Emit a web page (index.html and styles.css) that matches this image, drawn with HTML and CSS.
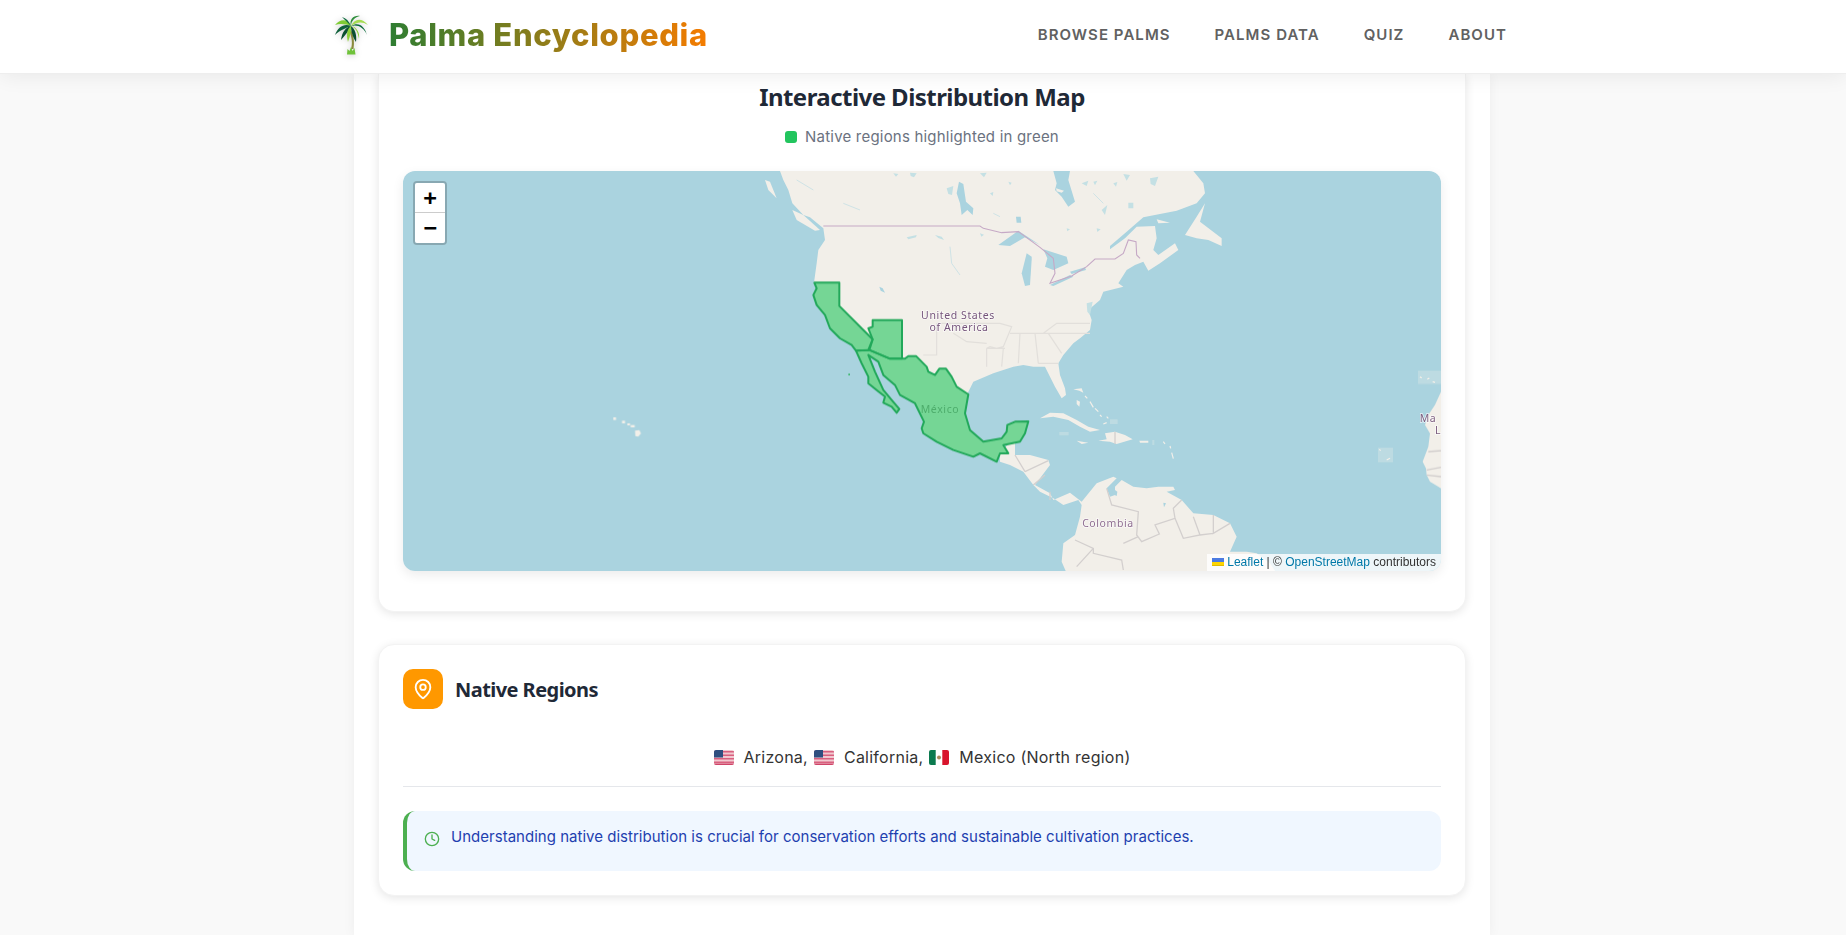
FILE: index.html
```html
<!DOCTYPE html>
<html lang="en">
<head>
    <meta charset="UTF-8">
    <meta name="viewport" content="width=device-width, initial-scale=1.0">
    <title>Palma Encyclopedia</title>
    <link rel="stylesheet" href="styles.css">
</head>
<body>

<header class="site-header">
    <div class="header-inner">
        <a class="brand" href="#">
            <!-- palm logo -->
            <svg class="brand-logo" width="36" height="40" viewBox="0 0 36 40">
                <path d="M16.5 16 C19 23 19.5 28 18 34 L20.5 34 C21.5 27 21 22 18.5 16 Z" fill="#8a8a3c"/>
                <path d="M14 39.5 L14.5 34 L16.5 36 L18 32 L19.5 36 L21.5 33 L22.5 39.5 Z" fill="#6fc23a"/>
                <path d="M18 11 C14 3 7 4 2 10 C7 8 13 9 18 11 Z" fill="#7fcb35"/>
                <path d="M18 11 C12 8 5 11 2 20 C7 15 13 13 18 11 Z" fill="#0e5f3a"/>
                <path d="M18 11 C13 12 9 17 8 25 C12 20 16 16 18 11 Z" fill="#0b4f31"/>
                <path d="M18 11 C14 14 13 20 15 27 C17 21 19 16 18 11 Z" fill="#8ed13a"/>
                <path d="M18 11 C18 15 19 21 23 27 C24 20 22 14 18 11 Z" fill="#0b4f31"/>
                <path d="M18 11 C22 12 25 17 26 24 C27 18 24 12 18 11 Z" fill="#8ed13a"/>
                <path d="M18 11 C24 9 31 12 34 20 C32 12 26 6 18 11 Z" fill="#0e6b3d"/>
                <path d="M18 11 C24 7 29 6 35 10 C29 3 22 3 18 11 Z" fill="#a5dc52"/>
                <path d="M18 11 C18 6 22 2 27 1 C21 0 16 4 18 11 Z" fill="#2f8f3c"/>
                <path d="M18 11 C16 6 13 3 9 2 C12 5 15 8 18 11 Z" fill="#0e6b3d"/>
            </svg>
            <span class="brand-name">Palma Encyclopedia</span>
        </a>
        <nav class="main-nav">
            <a href="#">Browse Palms</a>
            <a href="#">Palms Data</a>
            <a href="#">Quiz</a>
            <a href="#">About</a>
        </nav>
    </div>
</header>

<main class="page">

    <section class="card card-map">
        <h2 class="map-title">Interactive Distribution Map</h2>
        <p class="map-legend"><span class="legend-dot"></span>Native regions highlighted in green</p>

        <div class="map">
            <!-- viewBox uses page coordinates, the groups are scaled up sketches of each area -->
            <svg class="map-canvas" width="1038" height="400" viewBox="403 171 1038 400">
                <defs>
                    <polygon id="california" points="103,68 178,68 178,138 278,238 265,270 228,272 215,255 180,235 150,205 135,165 110,135 100,105 110,85"/>
                    <polygon id="arizona" points="278,180 366,180 366,296 330,296 268,270 278,238 265,205 278,200"/>
                    <polygon id="mexico" points="228,272 268,270 330,296 375,296 385,288 408,288 440,320 445,335 465,345 478,326 498,326 515,350 530,380 565,403 555,460 570,510 610,545 665,535 680,515 682,495 705,485 745,484 735,520 720,545 670,555 685,580 660,580 650,605 600,580 580,590 520,570 470,545 430,520 425,505 432,485 405,430 360,405 345,375 310,345 295,305 265,285 285,335 310,390 335,420 358,447 350,458 335,440 310,428 315,410 290,390 265,370 265,350 245,310"/>
                </defs>

                <rect class="water" x="403" y="171" width="1038" height="400"/>

                <g class="tiles">
                    <!-- north america -->
                    <g transform="translate(760 160) scale(.33333)">
                        <path class="land" d="M60,33 L70,60 L85,90 L97,130 L130,165 L150,172 L190,205 L195,240 L175,270 L170,310 L162,368 L180,420 L260,520 L330,572 L390,596 L435,596 L540,650 L625,703 L623,700 L640,665 L700,640 L760,620 L790,615 L820,620 L855,620 L870,650 L885,680 L905,715 L918,705 L915,685 L900,645 L895,610 L910,585 L940,550 L960,535 L990,510 L995,480 L985,450 L1020,420 L1030,395 L1090,380 L1075,370 L1100,330 L1125,315 L1150,305 L1165,332 L1200,310 L1255,270 L1245,250 L1195,285 L1180,270 L1190,235 L1185,198 L1130,200 L1095,235 L1050,268 L1050,258 L1100,215 L1150,172 L1250,152 L1310,130 L1335,100 L1330,70 L1300,33 Z"/>
                        <path class="land" d="M97,150 L130,165 L180,210 L165,212 L110,180 Z"/>
                        <path class="land" d="M15,60 L30,65 L50,115 L25,90 Z"/>
                        <path class="land" d="M1275,225 L1310,170 L1335,130 L1320,185 L1385,235 L1385,258 L1345,240 L1310,235 Z"/>
                        <path class="land" d="M1190,178 L1230,188 L1195,190 Z"/>

                        <path class="lake" d="M880,33 L930,33 L925,60 L945,125 L925,140 L905,110 L885,90 L890,70 Z"/>
                        <path class="land" d="M888,85 L912,92 L905,98 L890,94 Z"/>
                        <path class="lake" d="M597,65 L610,72 L618,125 L640,145 L638,165 L622,150 L605,165 L600,130 L590,100 Z"/>
                        <path class="lake" d="M715,255 L775,212 L840,255 L795,232 L750,258 Z"/>
                        <path class="lake" d="M785,340 L800,280 L815,290 L815,300 L810,375 L795,378 Z"/>
                        <path class="lake" d="M850,268 L920,290 L925,310 L880,330 L855,320 L862,295 Z"/>
                        <path class="lake" d="M870,375 L930,345 L940,350 L880,378 Z"/>
                        <path class="lake" d="M930,335 L975,322 L978,330 L935,342 Z"/>
                        <path class="lake" d="M768,170 L782,170 L784,188 L770,188 Z"/>
                        <path class="lake" d="M358,380 L368,385 L375,398 L362,392 Z"/>
                        <path class="lake-soft" d="M450,38 L470,40 L462,52 L452,48 Z M660,40 L680,38 L672,52 Z M560,85 L580,78 L576,105 L565,102 Z M965,70 L985,62 L980,78 Z M1000,65 L1012,62 L1005,76 Z M1090,42 L1110,45 L1100,62 Z M1170,55 L1195,50 L1185,78 L1172,72 Z M1025,150 L1042,135 L1035,165 Z M1105,128 L1120,128 L1120,145 L1105,145 Z M980,430 L998,425 L990,465 L982,455 Z M690,100 L700,96 L698,108 Z M400,40 L415,42 L408,50 Z M1060,70 L1072,66 L1068,80 Z M745,65 L755,68 L750,76 Z M1010,205 L1022,208 L1012,216 Z M920,205 L930,208 L922,214 Z M660,220 L672,224 L664,230 Z M525,225 L545,230 L552,240 L535,234 Z M440,232 L470,225 L468,232 L445,238 Z"/>
                        <path class="river" d="M570,260 L575,310 L600,345"/>
                        <path class="river" d="M700,160 L720,170 M250,130 L300,150 M110,60 L160,90 M1000,100 L1030,130"/>

                        <path class="state" d="M530,490 L530,585 L490,585 M530,490 L720,490 L755,500 L730,560 L710,565 L690,560 L680,565 L735,565 M750,520 L990,520 M850,520 L890,490 L990,490 M680,565 L680,620 M730,565 L725,620 M780,520 L775,610 M825,520 L835,610 M865,520 L905,580 M835,610 L895,610 M580,520 L620,545 L680,550"/>
                        <path class="border" d="M190,198 L660,198 L670,205 L725,218 L775,215 L840,262 L880,295 L885,340 L870,370 L935,348 L980,320 L1005,297 L1065,297 L1090,280 L1105,240 L1128,245 L1130,285 L1140,295"/>
                    </g>

                    <!-- mexico, under the green overlay -->
                    <g transform="translate(780 260) scale(.33333)">
                        <use href="#california" class="land"/>
                        <use href="#arizona" class="land"/>
                        <use href="#mexico" class="land"/>
                    </g>

                    <!-- central + south america -->
                    <g transform="translate(1000 420) scale(.33333)">
                        <path class="land" d="M0,96 L45,55 L45,105 L90,105 L145,120 L150,135 L105,195 L150,220 L160,240 L210,218 L245,245 L290,190 L340,170 L350,175 L320,205 L330,230 L345,225 L345,200 L365,180 L400,200 L440,205 L475,200 L520,200 L525,210 L500,215 L545,240 L580,280 L640,285 L690,310 L710,350 L690,395 L740,395 L770,400 L810,430 L830,460 L200,460 L185,425 L190,370 L225,345 L240,290 L245,255 L235,240 L190,255 L160,235 L120,215 L100,195 L70,155 L30,135 L0,125 Z"/>
                        <path class="state dark" d="M45,105 L75,155 M75,155 L145,122 M100,195 L135,165 M150,215 L150,240 M320,205 L335,255 L415,275 L410,345 L425,365 L478,342 L465,315 L525,295 L520,265 L545,240 M525,295 L550,355 L600,345 L580,290 M640,285 L640,340 L690,310 M600,345 L640,340 M225,360 L280,385 L280,400 L365,420 L370,450 M370,370 L415,350 M280,385 L230,440"/>
                        <path class="lake" d="M338,205 L352,215 L350,228 L338,222 Z"/>
                        <path class="lake" d="M490,248 L498,250 L492,262 Z"/>
                    </g>

                    <!-- caribbean -->
                    <g transform="translate(1000 320) scale(.33333)">
                        <path class="land" d="M120,295 L150,278 L190,280 L230,300 L265,320 L300,330 L270,335 L240,320 L205,300 L160,290 Z"/>
                        <path class="land" d="M295,362 L320,358 L315,340 L345,335 L375,345 L398,358 L350,372 L330,365 Z"/>
                        <path class="land" d="M230,362 L265,368 L245,372 Z"/>
                        <path class="land" d="M418,362 L445,362 L445,368 L420,368 Z"/>
                        <path class="land" d="M230,240 L240,245 L238,260 L230,252 Z"/>
                        <path class="land" d="M220,208 L245,205 L250,218 L238,212 Z"/>
                        <path class="speck" d="M255,228 L262,235 M270,245 L280,262 M285,265 L295,275 M300,285 L305,290 M320,290 L325,295 M310,312 L320,308 M490,365 L495,372 M510,378 L512,385 M515,398 L520,416"/>
                        <rect class="tile-ghost" x="330" y="298" width="23" height="14"/>
                        <rect class="tile-ghost" x="178" y="336" width="28" height="10"/>
                        <rect class="tile-ghost" x="457" y="360" width="6" height="15"/>
                        <path class="state dark" d="M345,335 L345,372"/>
                    </g>

                    <!-- west africa, islands off it -->
                    <g transform="translate(1340 350) scale(.33333)">
                        <path class="land" d="M303,125 L285,165 L265,195 L255,225 L270,250 L265,290 L248,335 L258,355 L260,375 L270,395 L295,410 L303,415 L310,415 L310,125 Z"/>
                        <path class="state dark" d="M265,305 L303,302 M260,360 L303,352 M260,375 L303,380"/>
                        <rect class="tile-ghost" x="234" y="62" width="69" height="40"/>
                        <rect class="tile-ghost" x="114" y="293" width="45" height="44"/>
                        <path class="speck" d="M240,80 L245,84 M262,88 L268,84 M278,95 L285,97 M118,298 L122,302 M140,330 L150,325"/>
                    </g>

                    <!-- hawaii -->
                    <g transform="translate(590 390) scale(.33333)">
                        <path class="land" d="M135,122 L148,120 L153,130 L145,140 L136,138 Z"/>
                        <rect class="land" x="70" y="82" width="8" height="8"/>
                        <rect class="land" x="96" y="92" width="9" height="8"/>
                        <rect class="land" x="112" y="100" width="8" height="6"/>
                        <rect class="land" x="122" y="105" width="12" height="7"/>
                    </g>

                    <text class="label label-big" x="958" y="319">United States</text>
                    <text class="label label-big" x="959" y="331">of America</text>
                    <text class="label" x="1108" y="527">Colombia</text>
                    <text class="label label-small" x="1428" y="422">Ma</text>
                    <text class="label label-small" x="1438" y="434">L</text>
                    <text class="label label-mx" x="940" y="413">México</text>
                </g>

                <!-- native regions overlay -->
                <g transform="translate(780 260) scale(.33333)">
                    <use href="#california" class="native"/>
                    <use href="#arizona" class="native"/>
                    <use href="#mexico" class="native"/>
                    <rect class="native-dot" x="205" y="341" width="5" height="5"/>
                </g>
            </svg>

            <div class="zoom-control">
                <a class="zoom-btn" href="#">+</a>
                <a class="zoom-btn" href="#">&#x2212;</a>
            </div>

            <div class="attribution">
                <a href="#"><svg class="ua-flag" width="12" height="8" viewBox="0 0 12 8"><path fill="#4C7BE1" d="M0 0h12v4H0z"/><path fill="#FFD500" d="M0 4h12v3H0z"/><path fill="#E0BC00" d="M0 7h12v1H0z"/></svg> Leaflet</a>
                <span class="sep">|</span> &copy; <a href="#">OpenStreetMap</a> contributors
            </div>
        </div>
    </section>

    <section class="card">
        <div class="section-head">
            <span class="section-icon">
                <svg width="22" height="22" viewBox="0 0 24 24" fill="none" stroke="#fff" stroke-width="2" stroke-linecap="round" stroke-linejoin="round">
                    <path d="M20 10c0 4.993-5.539 10.193-7.399 11.799a1 1 0 0 1-1.202 0C9.539 20.193 4 14.993 4 10a8 8 0 0 1 16 0"/>
                    <circle cx="12" cy="10" r="3"/>
                </svg>
            </span>
            <h3>Native Regions</h3>
        </div>

        <p class="regions">
            <svg class="flag" viewBox="0 0 20 15"><rect width="20" height="15" fill="#f1c9d0"/><path d="M0 1h20v1.5H0zM0 4.5h20V6H0zM0 8h20v1.5H0zM0 11.5h20V13H0z" fill="#d9607f"/><rect y="13.5" width="20" height="1.5" fill="#cf4468"/><rect width="9" height="7.5" fill="#2f4f80"/></svg>
            <span>Arizona,</span>
            <svg class="flag" viewBox="0 0 20 15"><rect width="20" height="15" fill="#f1c9d0"/><path d="M0 1h20v1.5H0zM0 4.5h20V6H0zM0 8h20v1.5H0zM0 11.5h20V13H0z" fill="#d9607f"/><rect y="13.5" width="20" height="1.5" fill="#cf4468"/><rect width="9" height="7.5" fill="#2f4f80"/></svg>
            <span>California,</span>
            <svg class="flag" viewBox="0 0 20 15"><rect width="20" height="15" fill="#fff"/><rect width="6.7" height="15" fill="#0b7a4f"/><rect x="13.3" width="6.7" height="15" fill="#d8142c"/><circle cx="10" cy="7.5" r="2" fill="#a9895a"/></svg>
            <span>Mexico (North region)</span>
        </p>

        <div class="note">
            <svg class="note-icon" width="16" height="16" viewBox="0 0 24 24" fill="none" stroke="#4caf50" stroke-width="2" stroke-linecap="round" stroke-linejoin="round">
                <circle cx="12" cy="12" r="10"/>
                <polyline points="12 6 12 12 16 14"/>
            </svg>
            <p>Understanding native distribution is crucial for conservation efforts and sustainable cultivation practices.</p>
        </div>
    </section>

</main>

</body>
</html>
```

FILE: styles.css
```css
* {
    box-sizing: border-box;
}
body {
    margin: 0;
    padding-right: 2px;
    background-color: #f9f9f9;
    font-family: "Inter", "Noto Sans", sans-serif;
    color: #333;
}
a {
    text-decoration: none;
}

/* header */
.site-header {
    position: relative;
    z-index: 10;
    height: 74px;
    margin-right: -2px;
    padding-right: 2px;
    background-color: #fff;
    border-bottom: 1px solid #eee;
    box-shadow: 0 2px 20px rgba(0, 0, 0, 0.07);
}
.header-inner {
    width: 1200px;
    height: 100%;
    margin: 0 auto;
    padding: 0 15px 4px 11px;
    display: flex;
    align-items: center;
    justify-content: space-between;
}
.brand {
    display: flex;
    align-items: center;
    gap: 20px;
}
.brand-logo {
    filter: drop-shadow(0 1px 3px rgba(0, 0, 0, 0.2));
}
.brand-name {
    font-size: 31px;
    font-weight: 800;
    letter-spacing: 0.65px;
    line-height: 40px;
    background: linear-gradient(90deg, #2e7d32, #f57c00);
    -webkit-background-clip: text;
    background-clip: text;
    color: transparent;
}
.main-nav {
    display: flex;
    gap: 44px;
}
.main-nav a {
    font-size: 15px;
    font-weight: 600;
    letter-spacing: 1.05px;
    text-transform: uppercase;
    color: #616161;
}

/* page column */
.page {
    width: 1136px;
    min-height: 861px;
    margin: 0 auto;
    padding: 0 24px 40px;
    background-color: #fff;
    box-shadow: 0 0 12px rgba(0, 0, 0, 0.05);
}
.card {
    padding: 24px;
    background-color: #fff;
    border: 1px solid #f3f3f3;
    border-radius: 16px;
    box-shadow: 0 2px 10px rgba(0, 0, 0, 0.1);
}
.card-map {
    margin-bottom: 32px;
    padding-top: 7px;
    border-top: 0;
    border-radius: 0 0 16px 16px;
}
.map-title {
    margin: 0 0 12px;
    font-family: "Noto Sans", sans-serif;
    font-size: 24px;
    font-weight: 700;
    line-height: 32px;
    letter-spacing: -0.55px;
    text-align: center;
    color: #1f2937;
}
.map-legend {
    margin: 0 0 22px;
    display: flex;
    align-items: center;
    justify-content: center;
    gap: 8px;
    font-size: 15px;
    letter-spacing: 0.2px;
    line-height: 24px;
    color: #6b7280;
}
.legend-dot {
    width: 12px;
    height: 12px;
    border-radius: 3px;
    background-color: #22c55e;
}

/* map */
.map {
    position: relative;
    height: 400px;
    margin-bottom: 16px;
    overflow: hidden;
    border-radius: 12px;
    box-shadow: 0 4px 12px rgba(0, 0, 0, 0.08);
}
.map-canvas {
    display: block;
}
.water {
    fill: #aad3df;
}
.tiles {
    filter: blur(0.5px);
}
.land {
    fill: #f2efe9;
}
.lake {
    fill: #aad3df;
}
.lake-soft {
    fill: #c4e0e4;
}
.river {
    fill: none;
    stroke: #cfe3e6;
    stroke-width: 1;
    vector-effect: non-scaling-stroke;
}
.speck {
    fill: none;
    stroke: #f2efe9;
    stroke-width: 1.2;
    vector-effect: non-scaling-stroke;
}
.state {
    fill: none;
    stroke: #e2dfdb;
    stroke-width: 1.2;
    vector-effect: non-scaling-stroke;
}
.state.dark {
    stroke: #d3cfce;
    stroke-width: 1.3;
}
.border {
    fill: none;
    stroke: #c6a9c6;
    stroke-width: 1.1;
    vector-effect: non-scaling-stroke;
}
.tile-ghost {
    fill: #f2efe9;
    opacity: 0.28;
}
.label {
    font-family: "Noto Sans", sans-serif;
    font-size: 10.5px;
    letter-spacing: 0.6px;
    text-anchor: middle;
    fill: #8e6d90;
    paint-order: stroke;
    stroke: rgba(255, 255, 255, 0.7);
    stroke-width: 1.5px;
}
.label-big {
    fill: #74537a;
}
.label-small {
    fill: #7d5f80;
}
.label-mx {
    fill: #8e8a80;
    stroke: none;
}
defs polygon {
    vector-effect: non-scaling-stroke;
}
.native {
    fill: #22c55e;
    fill-opacity: 0.6;
    stroke: #22a85a;
    stroke-width: 2;
    stroke-linejoin: round;
}
.native-dot {
    fill: #34b565;
}
.zoom-control {
    position: absolute;
    top: 10px;
    left: 10px;
    border: 2px solid rgba(0, 0, 0, 0.2);
    border-radius: 4px;
    background-clip: padding-box;
}
.zoom-btn {
    display: block;
    width: 30px;
    height: 30px;
    font: bold 22px/30px "DejaVu Sans Mono", monospace;
    text-align: center;
    color: #000;
    background-color: #fff;
}
.zoom-btn:first-child {
    border-bottom: 1px solid #ccc;
    border-radius: 2px 2px 0 0;
}
.zoom-btn:last-child {
    border-radius: 0 0 2px 2px;
}
.attribution {
    position: absolute;
    right: 0;
    bottom: 0;
    padding: 0 5px;
    font: 12px/17px "Liberation Sans", Arial, sans-serif;
    color: #333;
    background-color: rgba(255, 255, 255, 0.8);
}
.attribution a {
    color: #0078a8;
}
.ua-flag {
    display: inline;
}

/* native regions */
.section-head {
    display: flex;
    align-items: center;
    gap: 12px;
}
.section-head h3 {
    margin: 0;
    font-family: "Noto Sans", sans-serif;
    font-size: 20px;
    font-weight: 700;
    letter-spacing: -0.55px;
    color: #1f2937;
}
.section-icon {
    width: 40px;
    height: 40px;
    display: flex;
    align-items: center;
    justify-content: center;
    border-radius: 10px;
    background-color: #ff9800;
}
.regions {
    margin: 36px 0 0;
    padding-bottom: 17px;
    display: flex;
    align-items: center;
    justify-content: center;
    font-size: 16px;
    letter-spacing: 0.25px;
    line-height: 24px;
    color: #333;
    border-bottom: 1px solid #e5e7eb;
}
.regions span {
    margin-right: 6px;
}
.regions span:last-child {
    margin-right: 0;
}
.flag {
    width: 20px;
    height: 15px;
    margin-right: 10px;
    border-radius: 2px;
}
.note {
    margin-top: 24px;
    padding: 16px 20px 24px 17px;
    display: flex;
    align-items: flex-start;
    gap: 11px;
    background-color: #f0f7ff;
    border-left: 4px solid #4caf50;
    border-radius: 12px;
}
.note p {
    margin: 0;
    font-size: 15px;
    letter-spacing: 0.02px;
    line-height: 20px;
    color: #1e40af;
}
.note-icon {
    margin-top: 4px;
    flex-shrink: 0;
}
```
